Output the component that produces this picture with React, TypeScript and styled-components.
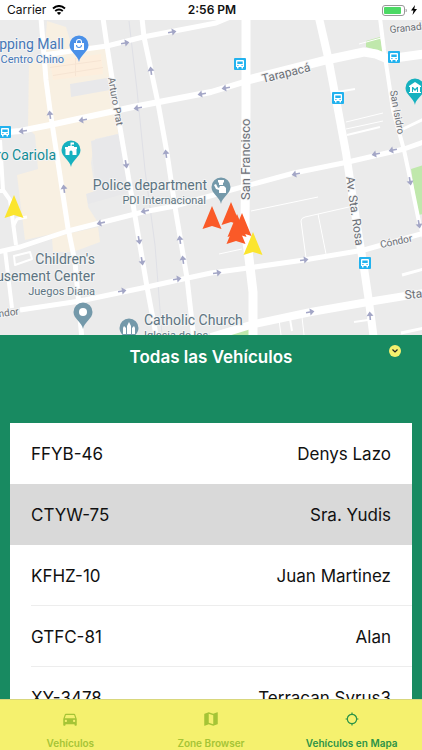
import React from "react";
import styled, { createGlobalStyle } from "styled-components";
import { MdDirectionsCar, MdMap, MdGpsNotFixed } from "react-icons/md";

const GlobalStyle = createGlobalStyle`
  * { box-sizing: border-box; }
  body {
    margin: 0;
    font-family: Inter, "Liberation Sans", sans-serif;
    color: #111;
  }
  button { font: inherit; border: 0; padding: 0; background: none; cursor: pointer; }
`;

const Screen = styled.div`
  display: flex;
  flex-direction: column;
  height: 100vh;
  overflow: hidden;
  background: #188a61;
`;

const StatusBar = styled.header`
  display: grid;
  grid-template-columns: 1fr auto 1fr;
  align-items: center;
  flex: none;
  height: 20px;
  padding: 0 5px 0 7px;
  background: #fff;
  font-size: 12px;
  line-height: 20px;
`;

const StatusGroup = styled.div<{ $end?: boolean }>`
  display: flex;
  align-items: center;
  justify-content: ${(p) => (p.$end ? "flex-end" : "flex-start")};
  gap: ${(p) => (p.$end ? 4 : 6)}px;
`;

const Clock = styled.time`
  font-weight: 600;
`;

const MapArea = styled.section`
  flex: 0 0 42%;
  min-height: 0;
  overflow: hidden;
  background: #ebebeb;
`;

const MapCanvas = styled.svg`
  display: block;
  width: 100%;
  height: 100%;
  font-family: Roboto, sans-serif;
`;

const Panel = styled.main`
  display: flex;
  flex-direction: column;
  flex: 1 1 0;
  min-height: 0;
  overflow: hidden;
  padding: 0 10px;
`;

const PanelHeader = styled.div`
  display: grid;
  grid-template-columns: 1fr auto 1fr;
  flex: none;
  height: 88px;
  padding: 10px 11px 0;
`;

const Title = styled.h1`
  grid-column: 2;
  margin: 0;
  font-size: 17px;
  font-weight: 600;
  line-height: 24px;
  color: #fff;
`;

const CollapseButton = styled.button`
  justify-self: end;
  display: flex;
  align-items: center;
  justify-content: center;
  width: 12px;
  height: 12px;
  border-radius: 50%;
  background: #f5f16e;
`;

const List = styled.ul`
  margin: 0;
  padding: 0;
  list-style: none;
  flex: 1 1 0;
  min-height: 0;
  overflow: hidden;
  background: #fff;
`;

const Row = styled.li<{ $selected?: boolean }>`
  padding-left: 21px;
  background: ${(p) => (p.$selected ? "#d9d9d9" : "#fff")};
`;

const RowButton = styled.button<{ $line?: boolean }>`
  display: flex;
  align-items: center;
  justify-content: space-between;
  width: 100%;
  height: 61px;
  padding: 2px 21px 0 0;
  border-bottom: 1px solid ${(p) => (p.$line ? "#ededed" : "transparent")};
  font-size: 17px;
  color: #111;
`;

const TabBar = styled.nav`
  display: grid;
  grid-template-columns: repeat(3, 1fr);
  flex: none;
  height: 51px;
  border-top: 1px solid #d9d77c;
  background: #f5f16e;
`;

const Tab = styled.button<{ $active?: boolean }>`
  display: flex;
  flex-direction: column;
  align-items: center;
  justify-content: flex-end;
  padding-bottom: 1px;
  color: ${(p) => (p.$active ? "#2b9347" : "#a5c436")};
`;

const TabIcon = styled.span`
  display: flex;
  align-items: center;
  justify-content: center;
  height: 18px;
  margin-bottom: 9px;
`;

const TabLabel = styled.span`
  font-size: 10px;
  font-weight: 600;
  line-height: 12px;
`;

const ROADS: { w: number; d: string }[] = [
  { w: 5, d: "M41 18L44 55L46 80L50 110L68 228L75 262L82 340" },
  { w: 5, d: "M43 55L107 46L143 37L216 23L235 15" },
  { w: 5, d: "M103 18L107 46L117 110L126 163L134 210L147 287L157 340" },
  { w: 5, d: "M142 18L144 37L158 103L167 153L175 207L187 278L194 340" },
  { w: 6, d: "M-2 133L20 131L50 125L133 107L211 92L244 82" },
  { w: 9, d: "M244 81L326 60L364 52L376 54L388 59L424 54" },
  { w: 9, d: "M246 18L246 110L245 228L248 250L253 292L253 340" },
  { w: 8, d: "M319 18L328 57L338 110L346 153L357 226L364 268L369 302L374 340" },
  { w: 4, d: "M380 18L384 50L393 110L404 150L411 183L419 222L424 238" },
  { w: 5, d: "M424 142L404 149L348 162L294 173L231 190L175 206L143 212L68 231L20 247L-2 252" },
  { w: 5, d: "M424 233L364 250L304 260L248 268L211 273L183 279L147 287L80 301L20 310" },
  { w: 8, d: "M424 293L368 302L311 312L254 324L211 337" },
  { w: 4, d: "M0 140L3 190L10 200L16 245M-2 191L4 191M5 250L12 308" },
  { w: 3, d: "M27 217L17 219L13 227M403 129L424 119M402 275L424 269M401 333L424 328" },
  { w: 2, d: "M14 256L30 252L32 259L15 265ZM337 92L355 89M347 135L380 127M354 322L368 320M290 319L292 331" },
  { w: 1, d: "M346 122L383 113M346 129L383 121M251 211L318 197M219 254L242 249M306 258L301 221Q301 218 305 217L349 207M318 214L326 254M279 320L281 335M302 317L304 335M359 44L381 38" },
];

const BUSES = [[240, 64], [338, 98], [394, 57], [5, 132], [365, 263]];

const ARROWS: [number, number, number][] = [
  [125, 43, -10], [172, 32, -10], [151, 71, -98], [202, 94, 170], [138, 108, 170],
  [226, 88, 170], [50, 115, -98], [83, 120, 170], [23, 131, 172], [126, 164, 80],
  [166, 154, -98], [64, 189, -98], [145, 211, 167], [101, 223, 167], [296, 174, 168],
  [376, 154, 168], [393, 150, 168], [410, 181, 80], [419, 224, 80], [139, 240, 80],
  [142, 261, 80], [180, 240, -98], [183, 260, -98], [122, 291, -10], [177, 279, -10],
  [217, 273, -8], [304, 260, -8], [310, 312, -10], [370, 316, -95],
];

const VEHICLES: [number, number, string][] = [
  [14, 207, "#fbe52f"], [212, 218, "#fa5a28"], [231, 214, "#fa5a28"],
  [237, 226, "#fa5a28"], [242, 225, "#fa5a28"], [236, 233, "#fa5a28"],
  [253, 244, "#fbe52f"],
];

function Pin({ x, y, color, children }: { x: number; y: number; color: string; children: React.ReactNode }) {
  return (
    <g transform={`translate(${x} ${y})`}>
      <path d="M0 17C-1 10 -9.500 7 -9.500 0A9.500 9.500 0 0 1 9.500 0C9.500 7 1 10 0 17Z" fill={color} />
      {children}
    </g>
  );
}

function CityMap() {
  return (
    <MapCanvas viewBox="0 20 422 315" preserveAspectRatio="xMidYMid slice" role="img" aria-label="Mapa de vehículos">
      <path fill="#f8f0e2" d="M47 21L66 27L70 40L107 50L117 110L118 134L95 139L91 163L95 191L87 194L88 207L97 221L70 230L25 240L17 175L38 169L35 135L28 128L29 62L44 58ZM52 238L71 233L98 227L100 242L73 252L53 252Z" />
      <path fill="#fdeedd" d="M50 61L101 54L103 74L53 80Z" />
      <path fill="#f6e4d3" d="M50 67L101 60V61L50 68ZM53 75L103 67V68L53 76ZM75 58H76V76H75Z" />
      <path fill="#e8e8ea" d="M70 84L107 78L110 90L71 97ZM91 141L118 134L130 192L88 204L86 194L96 191Z" />
      <path fill="#c0e8ac" d="M366 41L380 37L383 52L366 47ZM411 169L424 165V214L418 215ZM222 335L249 328V340H220Z" />
      <path fill="none" stroke="#dfe0e6" d="M129 21L137 90L145 170L155 245L162 335" />
      {ROADS.map((r) => (
        <path key={r.d} d={r.d} fill="none" stroke="#fff" strokeWidth={r.w} strokeLinejoin="round" />
      ))}
      {ARROWS.map(([x, y, a]) => (
        <path key={`${x}-${y}`} transform={`translate(${x} ${y}) rotate(${a})`} d="M-4 -.8H0V-3.500L4.500 0L0 3.500V.8H-4Z" fill="#a3a6c6" />
      ))}
      {BUSES.map(([x, y]) => (
        <g key={`${x}-${y}`} transform={`translate(${x} ${y})`}>
          <rect x="-6" y="-6" width="12" height="12" rx="1" fill="#22b2ee" />
          <path fillRule="evenodd" fill="#fff" d="M-4 -3Q-4 -4 -3 -4H3Q4 -4 4 -3V3H3V4.500H1.500V3H-1.500V4.500H-3V3H-4ZM-2.700 -2.500V0H2.700V-2.500ZM-2.700 1V2H-1.500V1ZM1.500 1V2H2.700V1Z" />
        </g>
      ))}
      <g stroke="#f4f4f4" strokeWidth="2" paintOrder="stroke" strokeLinejoin="round" fill="#6b6f76">
        <g fontSize="14">
          <text x="64" y="49" textAnchor="end" fill="#4678b8">Shopping Mall</text>
          <text x="56" y="160" textAnchor="end" fill="#128c96">Teatro Cariola</text>
          <g fill="#5d7482">
            <text x="207" y="190" textAnchor="end">Police department</text>
            <text x="95" y="264" textAnchor="end">Children's</text>
            <text x="95" y="281" textAnchor="end">Amusement Center</text>
            <text x="144" y="325">Catholic Church</text>
          </g>
        </g>
        <g fontSize="11" fill="#5d7482">
          <text x="64" y="63" textAnchor="end" fill="#4678b8">Centro Chino</text>
          <text x="206" y="204" textAnchor="end">PDI Internacional</text>
          <text x="95" y="295" textAnchor="end">Juegos Diana</text>
          <text x="144" y="339">Iglesia de los</text>
        </g>
        <g fontSize="12">
          <text transform="translate(263 83) rotate(-14)">Tarapacá</text>
          <text transform="translate(250 200) rotate(-90)" fontSize="13">San Francisco</text>
          <text transform="translate(346 177) rotate(82)">Av. Sta. Rosa</text>
          <text x="405" y="299" transform="rotate(-5 405 299)">Sta. Isabel</text>
        </g>
        <g fontSize="10">
          <text x="390" y="33" transform="rotate(-6 390 33)">Granada</text>
          <text transform="translate(108 78) rotate(80)">Arturo Prat</text>
          <text transform="translate(390 91) rotate(80)">San Isidro</text>
          <text transform="translate(381 248) rotate(-12)">Cóndor</text>
          <text transform="translate(-13 319) rotate(-8)">Cóndor</text>
        </g>
      </g>
      <Pin x={79} y={45} color="#4a90e8">
        <path fillRule="evenodd" fill="#fff" d="M-5 -2H-3V-3A3 3 0 0 1 3 -3V-2H5V5H-5ZM-2 -2H2V-3A2 2 0 0 0 -2 -3ZM-3 0A3 3 0 0 0 3 0H2A2 2 0 0 1 -2 0Z" />
      </Pin>
      <Pin x={71} y={150} color="#16b1bf">
        <path fill="#fff" d="M-5.500 5V-1H-6V-3H-3V-4H-.5V-7.500H3V-5.500H.7V-4H3V-3H6V-1H5.500V5H1.500V2A1.500 1.500 0 0 0 -1.500 2V5Z" />
      </Pin>
      <Pin x={415} y={88} color="#16b1bf">
        <path fillRule="evenodd" fill="#fff" d="M-6 -2L0 -6L6 -2V-1H5V4H6V5H-6V4H-5V-1H-6ZM-3 -1V4H-2V1L0 3L2 1V4H3V-1H2L0 1L-2 -1Z" />
      </Pin>
      <Pin x={221} y={187} color="#7499aa">
        <path fill="#fff" d="M-3 -7H3V-5L2 -4V-2H-2V-4L-3 -5ZM-4 0L-2 1L-1 -1H3L5 1V6H-2V3L-5 2ZM-7 -2L-5 -3L-3 1L-5 2Z" />
      </Pin>
      <Pin x={83} y={312} color="#7499aa">
        <circle r="4" fill="#fff" />
      </Pin>
      <Pin x={129} y={328} color="#7499aa">
        <path fill="#fff" d="M-2 6V-2L0 -6L2 -2V6ZM-6 6V0L-5 -2L-3 0V6ZM3 6V0L5 -2L6 0V6Z" />
      </Pin>
      {VEHICLES.map(([x, y, color]) => (
        <path key={`${x}-${y}`} transform={`translate(${x} ${y})`} d="M0 -12L9.500 11L0 8L-9.500 11Z" fill={color} />
      ))}
    </MapCanvas>
  );
}

const VEHICLE_ROWS = [
  { plate: "FFYB-46", driver: "Denys Lazo" },
  { plate: "CTYW-75", driver: "Sra. Yudis", selected: true },
  { plate: "KFHZ-10", driver: "Juan Martinez", line: true },
  { plate: "GTFC-81", driver: "Alan", line: true },
  { plate: "XY-3478", driver: "Terracan Syrus3", line: true },
];

export default function App() {
  return (
    <>
      <GlobalStyle />
      <Screen>
        <StatusBar>
          <StatusGroup>
            <span>Carrier</span>
            <svg width="14" height="10" viewBox="0 0 14 10" fill="none" stroke="#000" strokeWidth="2" aria-hidden="true">
              <path d="M1 3.500Q7 -1.500 13 3.500M3.200 6Q7 3 10.800 6" />
              <path d="M7 10L4.800 7.800Q7 6.200 9.200 7.800Z" fill="#000" stroke="none" />
            </svg>
          </StatusGroup>
          <Clock>2:56 PM</Clock>
          <StatusGroup $end>
            <svg width="25" height="11" viewBox="0 0 25 11" aria-hidden="true">
              <rect x=".5" y=".5" width="22" height="10" rx="2.500" fill="#fff" stroke="#999" />
              <rect x="2" y="2" width="17" height="7" rx="1" fill="#4cd964" />
              <path d="M24 4V7Q25 5.500 24 4Z" fill="#999" stroke="#999" strokeWidth=".5" />
            </svg>
            <svg width="6" height="10" viewBox="0 0 6 10" aria-hidden="true">
              <path d="M4 0L0 5.500H2.500L1.500 10L6 4H3.300Z" />
            </svg>
          </StatusGroup>
        </StatusBar>
        <MapArea>
          <CityMap />
        </MapArea>
        <Panel>
          <PanelHeader>
            <Title>Todas las Vehículos</Title>
            <CollapseButton aria-label="Ocultar lista">
              <svg width="6" height="4" viewBox="0 0 6 4" fill="none" stroke="#222" strokeWidth="1.200" aria-hidden="true">
                <path d="M.5 .5L3 3L5.500 .5" />
              </svg>
            </CollapseButton>
          </PanelHeader>
          <List>
            {VEHICLE_ROWS.map((v) => (
              <Row key={v.plate} $selected={v.selected}>
                <RowButton $line={v.line}>
                  <span>{v.plate}</span>
                  <span>{v.driver}</span>
                </RowButton>
              </Row>
            ))}
          </List>
        </Panel>
        <TabBar>
          <Tab>
            <TabIcon><MdDirectionsCar size={18} /></TabIcon>
            <TabLabel>Vehículos</TabLabel>
          </Tab>
          <Tab>
            <TabIcon><MdMap size={18} /></TabIcon>
            <TabLabel>Zone Browser</TabLabel>
          </Tab>
          <Tab $active aria-current="page">
            <TabIcon><MdGpsNotFixed size={14} /></TabIcon>
            <TabLabel>Vehículos en Mapa</TabLabel>
          </Tab>
        </TabBar>
      </Screen>
    </>
  );
}
